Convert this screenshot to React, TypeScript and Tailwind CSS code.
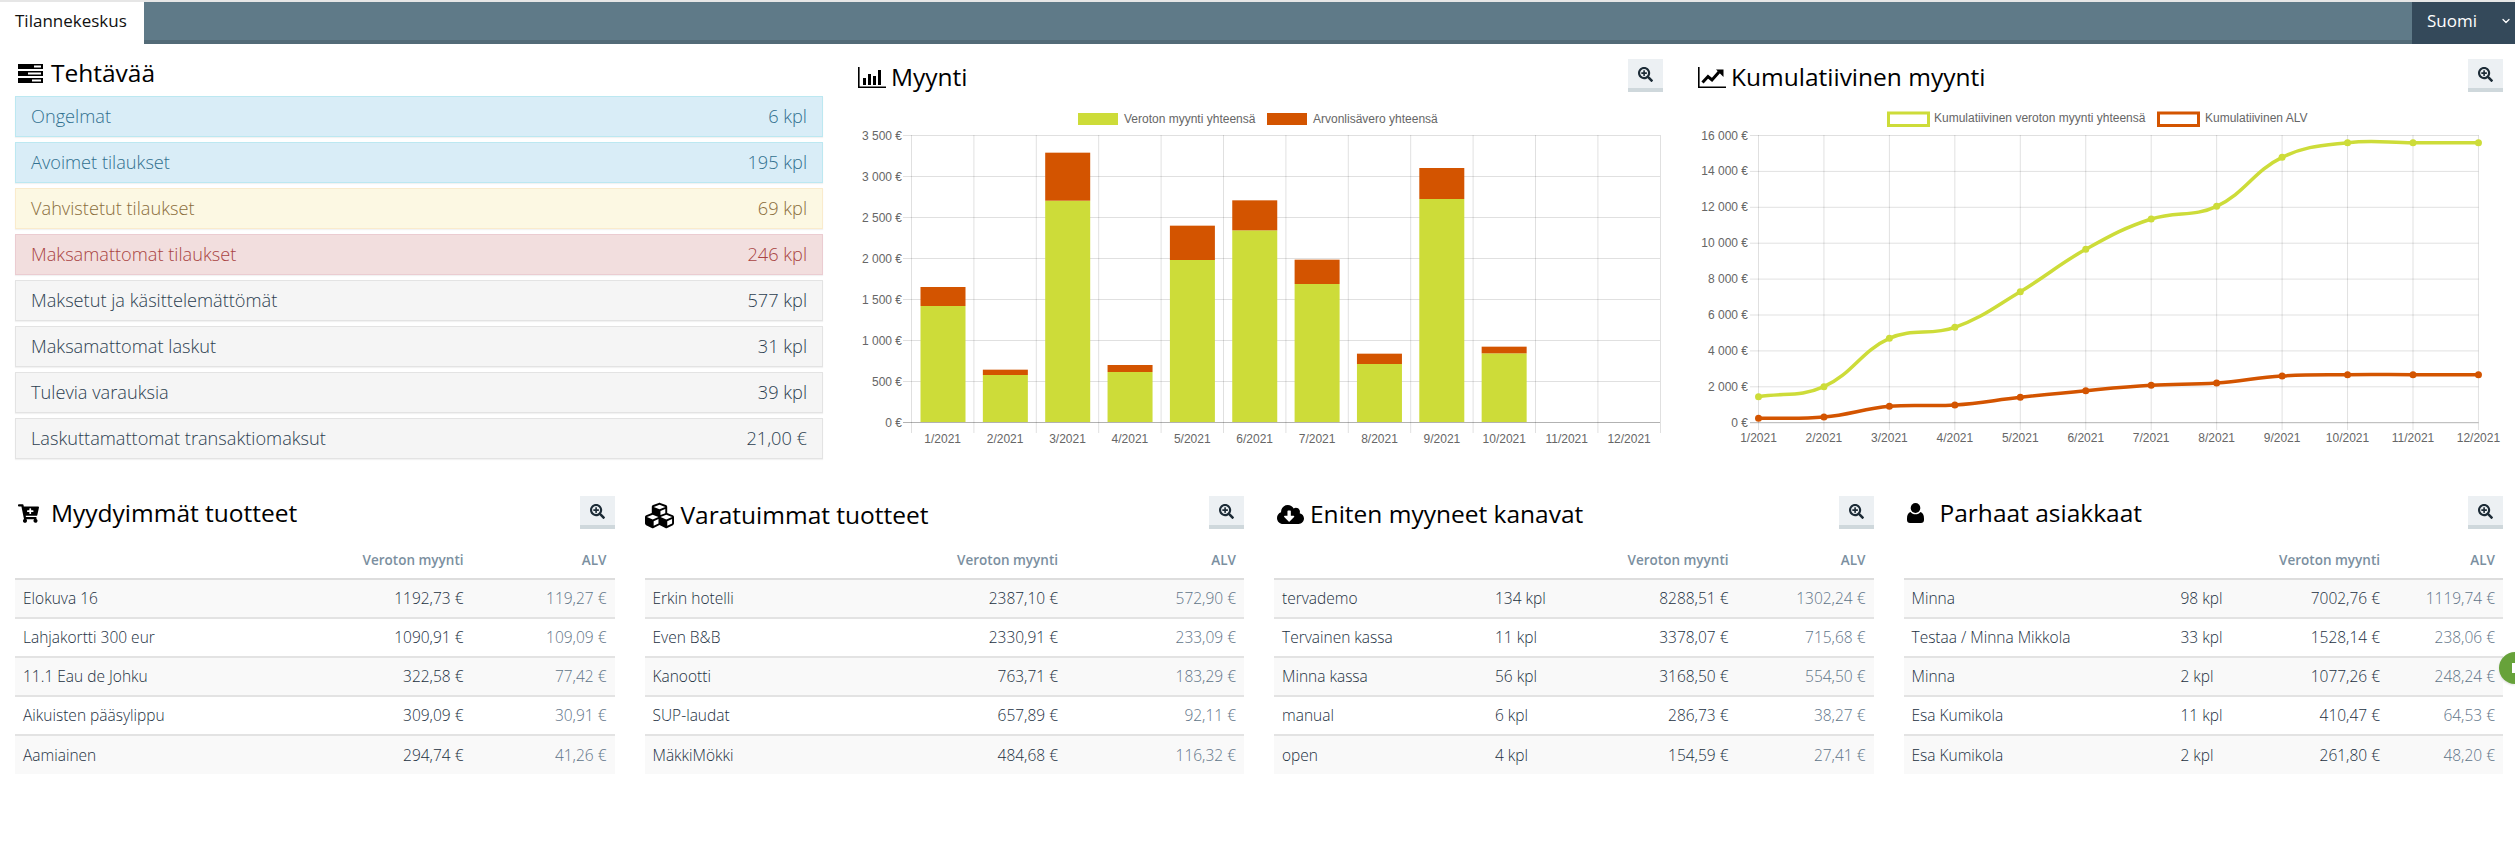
import { FaCartPlus, FaCubes, FaCloudDownloadAlt, FaSearchPlus } from "react-icons/fa";
import { ChevronDown } from "lucide-react";
import type { ReactNode } from "react";

const months = ["1/2021", "2/2021", "3/2021", "4/2021", "5/2021", "6/2021", "7/2021", "8/2021", "9/2021", "10/2021", "11/2021", "12/2021"];

const tasks = [
  { name: "Ongelmat", value: "6 kpl", cls: "bg-[#d9edf7] border-[#bce8f1] text-[#31708f]" },
  { name: "Avoimet tilaukset", value: "195 kpl", cls: "bg-[#d9edf7] border-[#bce8f1] text-[#31708f]" },
  { name: "Vahvistetut tilaukset", value: "69 kpl", cls: "bg-[#fcf8e3] border-[#faebcc] text-[#8a6d3b]" },
  { name: "Maksamattomat tilaukset", value: "246 kpl", cls: "bg-[#f2dede] border-[#ebccd1] text-[#a94442]" },
  { name: "Maksetut ja käsittelemättömät", value: "577 kpl", cls: "bg-[#f5f5f5] border-[#e3e3e3] text-[#2c3e50]" },
  { name: "Maksamattomat laskut", value: "31 kpl", cls: "bg-[#f5f5f5] border-[#e3e3e3] text-[#2c3e50]" },
  { name: "Tulevia varauksia", value: "39 kpl", cls: "bg-[#f5f5f5] border-[#e3e3e3] text-[#2c3e50]" },
  { name: "Laskuttamattomat transaktiomaksut", value: "21,00 €", cls: "bg-[#f5f5f5] border-[#e3e3e3] text-[#2c3e50]" },
];

function TasksIcon() {
  return (
    <svg width="25" height="19" viewBox="0 0 25 19">
      <rect x="0" y="0" width="25" height="5" fill="#000" />
      <rect x="0" y="7" width="25" height="5" fill="#000" />
      <rect x="0" y="14" width="25" height="5" fill="#000" />
      <rect x="16" y="1.5" width="7" height="2" fill="#fff" />
      <rect x="10" y="8.5" width="13" height="2" fill="#fff" />
      <rect x="14" y="15.5" width="9" height="2" fill="#fff" />
    </svg>
  );
}

function BarIcon() {
  return (
    <svg width="28" height="21" viewBox="0 0 28 21">
      <path d="M0 0h1.6v19.4H28V21H0z" fill="#000" />
      <rect x="5" y="11" width="3" height="7" fill="#000" />
      <rect x="10" y="7" width="3" height="11" fill="#000" />
      <rect x="15" y="9" width="3" height="9" fill="#000" />
      <rect x="20" y="3" width="3" height="15" fill="#000" />
    </svg>
  );
}

function LineIcon() {
  return (
    <svg width="28" height="21" viewBox="0 0 28 21">
      <path d="M0 0h1.6v19.4H28V21H0z" fill="#000" />
      <path d="M4.5 15.5 10 9.5l4 3.5 7-8" fill="none" stroke="#000" strokeWidth="3" />
      <path d="M18 2.5h7.5V10z" fill="#000" />
    </svg>
  );
}

function UserIcon() {
  return (
    <svg width="17" height="20" viewBox="0 0 17 20">
      <ellipse cx="8.5" cy="5" rx="4.8" ry="5" fill="#000" />
      <path d="M3.600 9c1 1.600 2.800 2.300 4.900 2.300s3.900-.7 4.900-2.300c2.400.6 3.600 3 3.600 6.500V17c0 1.800-1.200 3-3 3H3c-1.800 0-3-1.200-3-3v-1.500C0 12 1.200 9.600 3.600 9z" fill="#000" />
    </svg>
  );
}

function ZoomButton() {
  return (
    <button className="flex h-[33px] w-[35px] shrink-0 items-center justify-center border-b-4 border-[#cfd8dc] bg-[#ecf0f3] pt-[1px]">
      <FaSearchPlus size={15} className="text-[#1c2b36]" />
    </button>
  );
}

function Heading({ icon, title }: { icon: ReactNode; title: string }) {
  return (
    <h2 className="flex items-center text-[24.500px] leading-none font-medium text-black">
      <span className="flex w-[36px] shrink-0 items-center pl-[3px]">{icon}</span>
      {title}
    </h2>
  );
}

function GridY({ x1, x2, ys, labels, lx }: { x1: number; x2: number; ys: number[]; labels: string[]; lx: number }) {
  return (
    <>
      {ys.map((y, i) => (
        <g key={i}>
          <line x1={x1 - 8} x2={x2} y1={y} y2={y} stroke={i === ys.length - 1 ? "rgba(0,0,0,0.3)" : "rgba(0,0,0,0.12)"} />
          <text x={lx} y={y + 4} textAnchor="end" fontSize="12" fill="#666">{labels[i]}</text>
        </g>
      ))}
    </>
  );
}

function SalesChart() {
  const green = [798, 1005, 482, 996, 660, 571, 732, 972, 477, 940];
  const red = [741, 989, 338, 975, 557, 481, 659, 941, 384, 920];
  const toY = (z: number) => z / 3 + 40;
  const labels = ["3 500 €", "3 000 €", "2 500 €", "2 000 €", "1 500 €", "1 000 €", "500 €", "0 €"];
  const ys = labels.map((_, i) => 135.5 + i * 41);
  return (
    <svg viewBox="855 100 808 350" width="808" height="350" className="mt-[8px] block font-['Liberation_Sans',sans-serif]">
      <rect x="1078" y="113" width="40" height="12" fill="#cddc39" />
      <text x="1124" y="123" fontSize="12" fill="#666">Veroton myynti yhteensä</text>
      <rect x="1267" y="113" width="40" height="12" fill="#d35400" />
      <text x="1313" y="123" fontSize="12" fill="#666">Arvonlisävero yhteensä</text>
      <GridY x1={911} x2={1660} ys={ys} labels={labels} lx={902} />
      {months.map((m, i) => {
        const x = 911.500 + i * 62.4;
        return (
          <g key={m}>
            <line x1={x} x2={x} y1="135" y2="433" stroke="rgba(0,0,0,0.12)" />
            <text x={x + 31.2} y="443" textAnchor="middle" fontSize="12" fill="#666">{m}</text>
          </g>
        );
      })}
      <line x1="1660.500" x2="1660.500" y1="135" y2="433" stroke="rgba(0,0,0,0.12)" />
      {green.map((g, i) => {
        const x = 920.500 + i * 62.35;
        return (
          <g key={i}>
            <rect x={x} y={toY(g)} width="45" height={422 - toY(g)} fill="#cddc39" />
            <rect x={x} y={toY(red[i])} width="45" height={toY(g) - toY(red[i])} fill="#d35400" />
          </g>
        );
      })}
    </svg>
  );
}

// same bezier smoothing as the chart library (tension 0.4)
function spline(pts: [number, number][]) {
  const t = 0.4;
  const ctrl = pts.map((p, i) => {
    const a = pts[Math.max(i - 1, 0)];
    const b = pts[Math.min(i + 1, pts.length - 1)];
    const d01 = Math.hypot(p[0] - a[0], p[1] - a[1]);
    const d12 = Math.hypot(b[0] - p[0], b[1] - p[1]);
    const sum = d01 + d12 || 1;
    const fa = (t * d01) / sum;
    const fb = (t * d12) / sum;
    return {
      px: p[0] - fa * (b[0] - a[0]),
      py: p[1] - fa * (b[1] - a[1]),
      nx: p[0] + fb * (b[0] - a[0]),
      ny: p[1] + fb * (b[1] - a[1]),
    };
  });
  let d = `M${pts[0][0]} ${pts[0][1]}`;
  for (let i = 1; i < pts.length; i++) {
    d += ` C${ctrl[i - 1].nx} ${ctrl[i - 1].ny} ${ctrl[i].px} ${ctrl[i].py} ${pts[i][0]} ${pts[i][1]}`;
  }
  return d;
}

function CumulativeChart() {
  const labels = ["16 000 €", "14 000 €", "12 000 €", "10 000 €", "8 000 €", "6 000 €", "4 000 €", "2 000 €", "0 €"];
  const ys = labels.map((_, i) => 135.5 + i * 35.9);
  const xAt = (i: number) => 1758.500 + i * 65.45;
  const green = [1190, 1160, 1015, 982, 875, 748, 657, 619, 472, 428, 428, 428];
  const red = [1255, 1251, 1219, 1215, 1192, 1172, 1156, 1149, 1128, 1124, 1124, 1124];
  const series = [
    { color: "#cddc39", pts: green.map((z, i) => [xAt(i), z / 3] as [number, number]) },
    { color: "#d35400", pts: red.map((z, i) => [xAt(i), z / 3] as [number, number]) },
  ];
  return (
    <svg viewBox="1695 100 808 350" width="808" height="350" className="mt-[8px] block font-['Liberation_Sans',sans-serif]">
      <rect x="1888.500" y="113" width="40" height="12.500" fill="#fff" stroke="#cddc39" strokeWidth="3" />
      <text x="1934" y="122" fontSize="12" fill="#666">Kumulatiivinen veroton myynti yhteensä</text>
      <rect x="2158.500" y="113" width="40" height="12.500" fill="#fff" stroke="#d35400" strokeWidth="3" />
      <text x="2205" y="122" fontSize="12" fill="#666">Kumulatiivinen ALV</text>
      <GridY x1={1758} x2={2478.500} ys={ys} labels={labels} lx={1748} />
      {months.map((m, i) => (
        <g key={m}>
          <line x1={xAt(i)} x2={xAt(i)} y1="135" y2="430" stroke="rgba(0,0,0,0.12)" />
          <text x={xAt(i)} y="442" textAnchor="middle" fontSize="12" fill="#666">{m}</text>
        </g>
      ))}
      {series.map((s) => (
        <g key={s.color}>
          <path d={spline(s.pts)} fill="none" stroke={s.color} strokeWidth="3.500" />
          {s.pts.map((p, i) => (
            <circle key={i} cx={p[0]} cy={p[1]} r="3.500" fill={s.color} />
          ))}
        </g>
      ))}
    </svg>
  );
}

type Row = [string, string, string] | [string, string, string, string];

const tables: { title: string; icon: ReactNode; widths: string[]; rows: Row[] }[] = [
  {
    title: "Myydyimmät tuotteet",
    icon: <FaCartPlus size={21} className="text-black" />,
    widths: ["w-auto", "w-[160px]", "w-[143px]"],
    rows: [
      ["Elokuva 16", "1192,73 €", "119,27 €"],
      ["Lahjakortti 300 eur", "1090,91 €", "109,09 €"],
      ["11.1 Eau de Johku", "322,58 €", "77,42 €"],
      ["Aikuisten pääsylippu", "309,09 €", "30,91 €"],
      ["Aamiainen", "294,74 €", "41,26 €"],
    ],
  },
  {
    title: "Varatuimmat tuotteet",
    icon: <FaCubes size={29} className="-ml-[3px] text-black" />,
    widths: ["w-auto", "w-[160px]", "w-[178px]"],
    rows: [
      ["Erkin hotelli", "2387,10 €", "572,90 €"],
      ["Even B&B", "2330,91 €", "233,09 €"],
      ["Kanootti", "763,71 €", "183,29 €"],
      ["SUP-laudat", "657,89 €", "92,11 €"],
      ["MäkkiMökki", "484,68 €", "116,32 €"],
    ],
  },
  {
    title: "Eniten myyneet kanavat",
    icon: <FaCloudDownloadAlt size={27} className="text-black" />,
    widths: ["w-[213px]", "w-[110px]", "w-auto", "w-[137px]"],
    rows: [
      ["tervademo", "134 kpl", "8288,51 €", "1302,24 €"],
      ["Tervainen kassa", "11 kpl", "3378,07 €", "715,68 €"],
      ["Minna kassa", "56 kpl", "3168,50 €", "554,50 €"],
      ["manual", "6 kpl", "286,73 €", "38,27 €"],
      ["open", "4 kpl", "154,59 €", "27,41 €"],
    ],
  },
  {
    title: "Parhaat asiakkaat",
    icon: <UserIcon />,
    widths: ["w-[269px]", "w-[90px]", "w-auto", "w-[115px]"],
    rows: [
      ["Minna", "98 kpl", "7002,76 €", "1119,74 €"],
      ["Testaa / Minna Mikkola", "33 kpl", "1528,14 €", "238,06 €"],
      ["Minna", "2 kpl", "1077,26 €", "248,24 €"],
      ["Esa Kumikola", "11 kpl", "410,47 €", "64,53 €"],
      ["Esa Kumikola", "2 kpl", "261,80 €", "48,20 €"],
    ],
  },
];

function DataTable({ widths, rows }: { widths: string[]; rows: Row[] }) {
  const hasQty = rows[0].length === 4;
  return (
    <table className="w-full table-fixed border-collapse text-[15.500px] font-light">
      <colgroup>
        {widths.map((w, i) => (
          <col key={i} className={w} />
        ))}
      </colgroup>
      <thead>
        <tr className="h-[50px] border-b-2 border-[#dddddd] text-[13.500px] text-[#7b8fa0]">
          <th />
          {hasQty && <th />}
          <th className="px-2 pt-[13px] text-right font-semibold">Veroton myynti</th>
          <th className="px-2 pt-[13px] text-right font-semibold">ALV</th>
        </tr>
      </thead>
      <tbody>
        {rows.map((r, i) => (
          <tr key={i} className={`h-[39px] border-t-2 border-[#e3e3e3] first:border-t-0 ${i % 2 === 0 ? "bg-[#f9f9f9]" : "bg-white"}`}>
            {r.map((c, j) => {
              const last = j === r.length - 1;
              const first = j === 0;
              const qty = hasQty && j === 1;
              return (
                <td
                  key={j}
                  className={`truncate px-2 pt-[1px] ${first || qty ? "text-left" : "text-right"} ${last ? "text-[#5f7488]" : "text-[#22303f]"}`}
                >
                  {c}
                </td>
              );
            })}
          </tr>
        ))}
      </tbody>
    </table>
  );
}

export default function App() {
  return (
    <div className="relative h-[841px] w-[2515px] overflow-hidden bg-white font-['Open_Sans',sans-serif]">
      <nav className="flex h-[44px] border-t-2 border-[#e6e6e6] text-[17px]">
        <div className="flex w-[144px] items-center bg-white pb-[4px] pl-[15px] text-[#111]">Tilannekeskus</div>
        <div className="flex-1 border-b-4 border-[#536b77] bg-[#5f7a88]" />
        <div className="flex w-[103px] items-center bg-[#34495a] pb-[4px] pl-[15px] text-white">
          Suomi
          <ChevronDown size={12} strokeWidth={2.5} className="ml-[23px]" />
        </div>
      </nav>

      <section className="flex gap-[32px] pt-[15px] pr-[12px] pl-[15px]">
        <div className="w-[808px]">
          <div className="mb-[9px] flex h-[28px] items-center">
            <Heading icon={<TasksIcon />} title="Tehtävää" />
          </div>
          <div className="flex flex-col gap-[5px]">
            {tasks.map((t) => (
              <div key={t.name} className={`flex h-[41px] items-center justify-between border px-[15px] text-[18.200px] font-light shadow-[0_1px_1px_rgba(0,0,0,0.05)] ${t.cls}`}>
                <span>{t.name}</span>
                <span>{t.value}</span>
              </div>
            ))}
          </div>
        </div>

        <div className="w-[808px]">
          <div className="flex h-[33px] items-start justify-between">
            <div className="pt-[6px]">
              <Heading icon={<BarIcon />} title="Myynti" />
            </div>
            <ZoomButton />
          </div>
          <SalesChart />
        </div>

        <div className="w-[808px]">
          <div className="flex h-[33px] items-start justify-between">
            <div className="pt-[6px]">
              <Heading icon={<LineIcon />} title="Kumulatiivinen myynti" />
            </div>
            <ZoomButton />
          </div>
          <CumulativeChart />
        </div>
      </section>

      <section className="mt-[37px] grid grid-cols-4 gap-[30px] pr-[12px] pl-[15px]">
        {tables.map((t) => (
          <div key={t.title}>
            <div className="flex h-[33px] items-start justify-between">
              <div className="pt-[5px]">
                <Heading icon={t.icon} title={t.title} />
              </div>
              <ZoomButton />
            </div>
            <DataTable widths={t.widths} rows={t.rows} />
          </div>
        ))}
      </section>

      <div className="absolute top-[652px] right-0 flex h-[32px] w-[16px] items-center justify-end rounded-l-full bg-[#67a23a] shadow">
        <span className="h-[10px] w-[3px] bg-white" />
      </div>
    </div>
  );
}
